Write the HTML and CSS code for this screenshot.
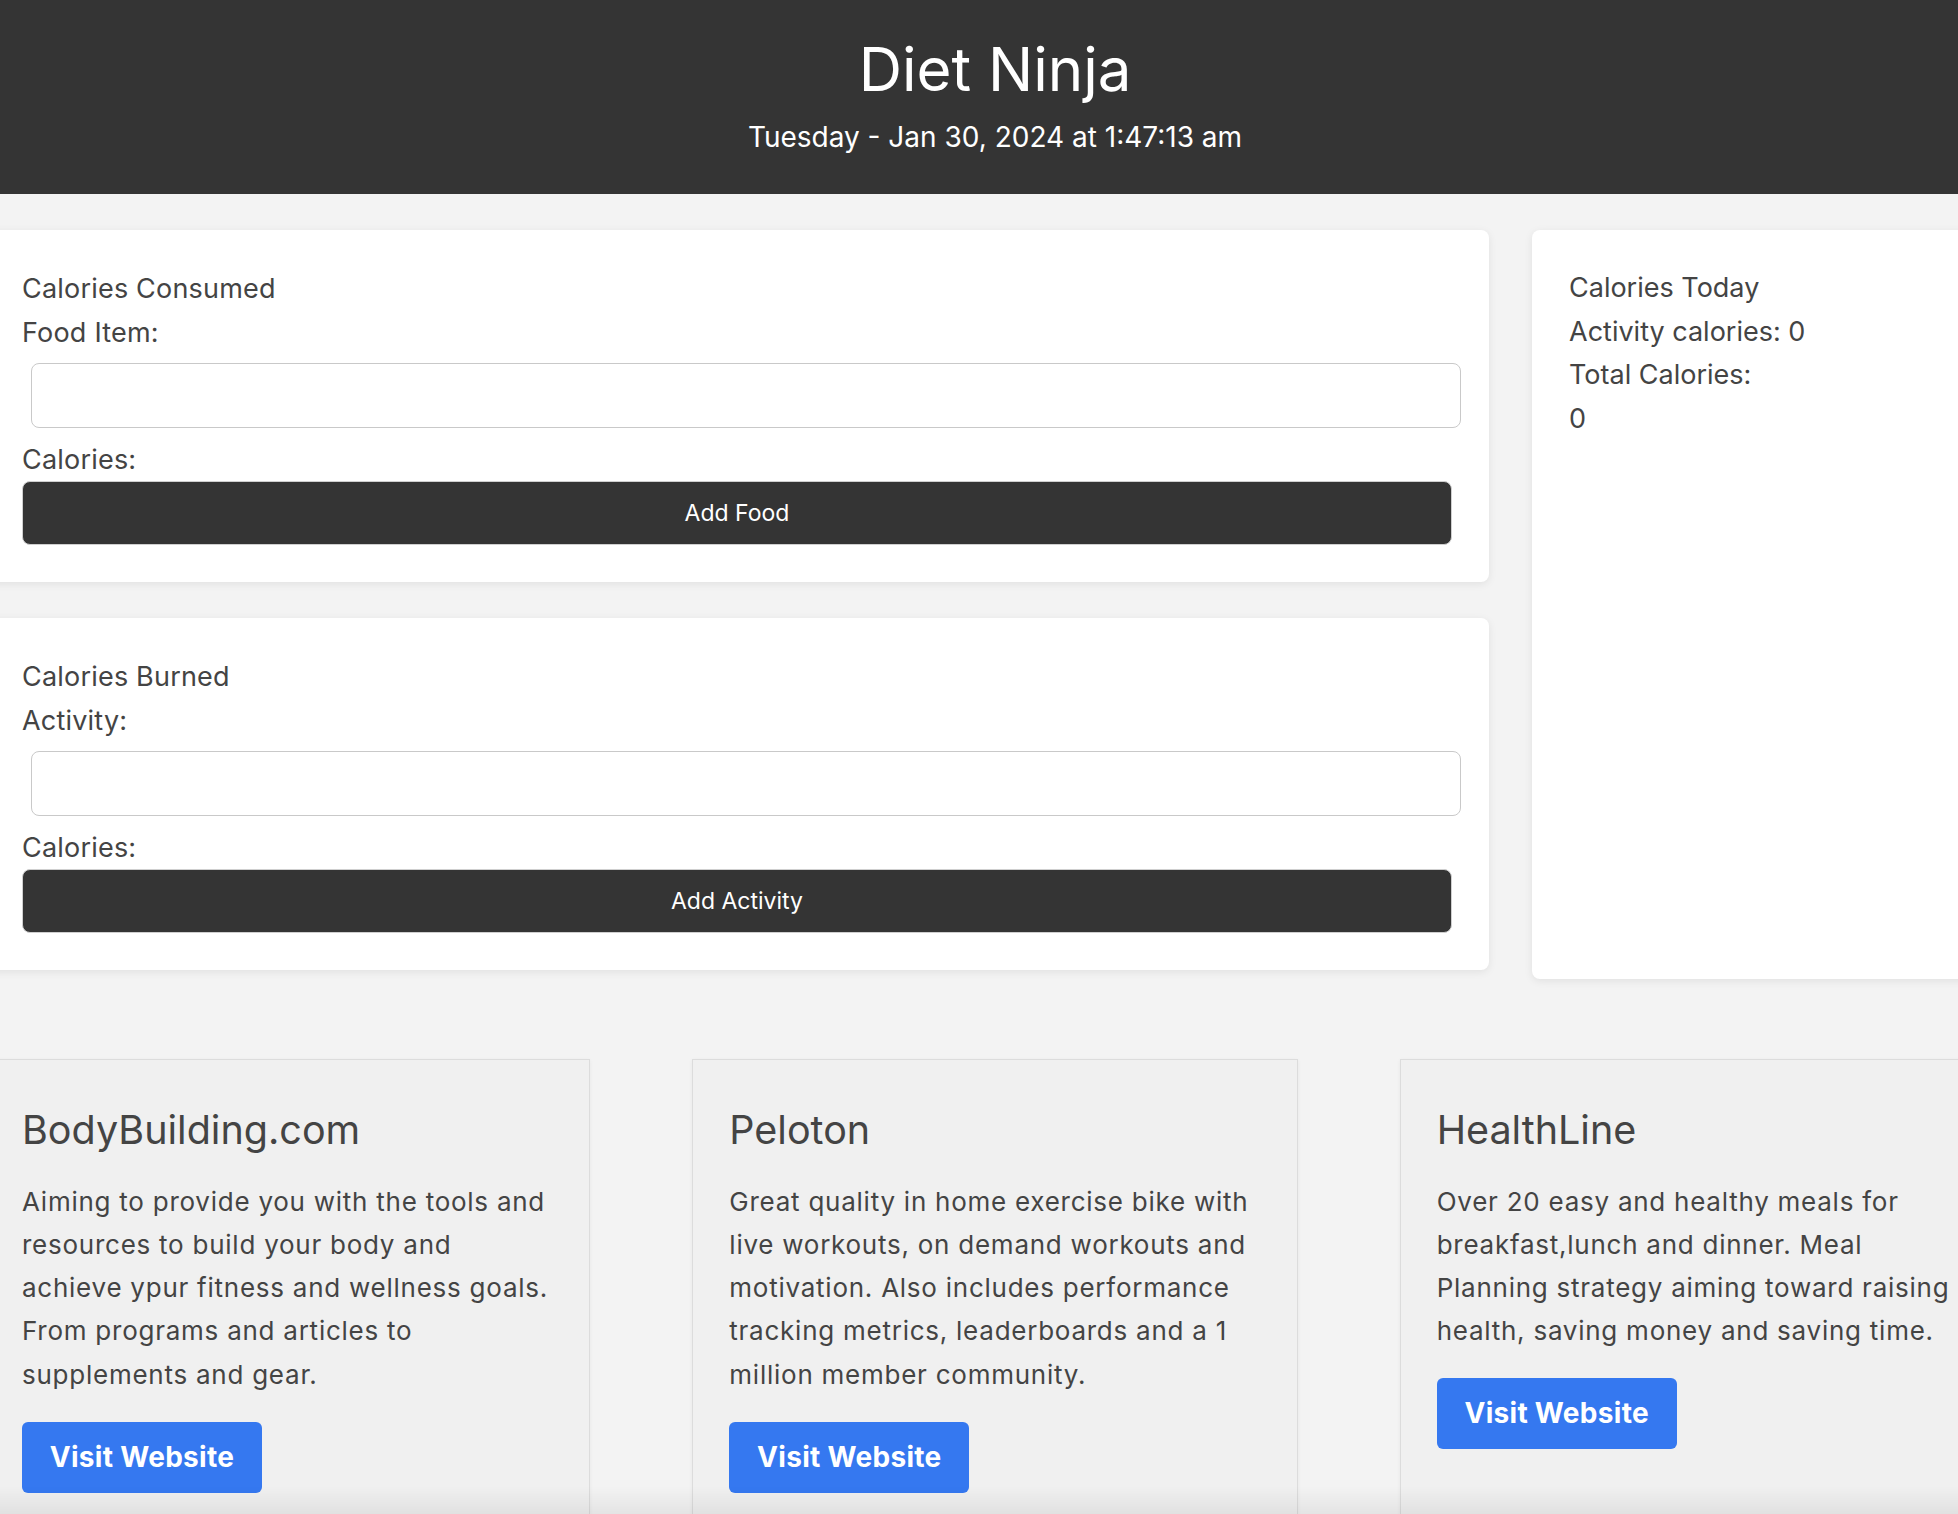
FILE: index.html
```html
<!DOCTYPE html>
<html lang="en">
<head>
<meta charset="utf-8">
<title>Diet Ninja</title>
<link rel="stylesheet" href="styles.css">
</head>
<body>
<div class="page">
  <header class="topbar">
    <h1 class="brand">Diet Ninja</h1>
    <p class="clock">Tuesday - Jan 30, 2024 at 1:47:13 am</p>
  </header>

  <main class="dash">
    <div class="forms">
      <section class="panel">
        <div class="line">Calories Consumed</div>
        <label class="line" for="food">Food Item:</label>
        <input class="field" id="food" type="text">
        <label class="line">Calories:</label>
        <button class="action" type="button">Add Food</button>
      </section>
      <section class="panel">
        <div class="line">Calories Burned</div>
        <label class="line" for="activity">Activity:</label>
        <input class="field" id="activity" type="text">
        <label class="line">Calories:</label>
        <button class="action" type="button">Add Activity</button>
      </section>
    </div>
    <aside class="summary">
      <div class="line">Calories Today</div>
      <div class="line">Activity calories: 0</div>
      <div class="line">Total Calories:</div>
      <div class="line">0</div>
    </aside>
  </main>

  <section class="links">
    <article class="site">
      <h2 class="site-name">BodyBuilding.com</h2>
      <p class="site-text">Aiming to provide you with the tools and resources to build your body and achieve ypur fitness and wellness goals. From programs and articles to supplements and gear.</p>
      <a class="visit" href="#">Visit Website</a>
    </article>
    <article class="site">
      <h2 class="site-name">Peloton</h2>
      <p class="site-text">Great quality in home exercise bike with live workouts, on demand workouts and motivation. Also includes performance tracking metrics, leaderboards and a 1 million member community.</p>
      <a class="visit" href="#">Visit Website</a>
    </article>
    <article class="site">
      <h2 class="site-name">HealthLine</h2>
      <p class="site-text">Over 20 easy and healthy meals for breakfast,lunch and dinner. Meal Planning strategy aiming toward raising health, saving money and saving time.</p>
      <a class="visit" href="#">Visit Website</a>
    </article>
  </section>
</div>
<div class="bottom-fade"></div>
</body>
</html>
```

FILE: styles.css
```css
html, body {
  margin: 0;
  padding: 0;
  overflow: hidden;
  background: #f3f3f3;
}

body {
  font-family: "Inter", "Liberation Sans", sans-serif;
  color: #444444;
}

.page {
  width: 1990px;
}

.topbar {
  background: #343434;
  color: #ffffff;
  text-align: center;
  padding: 32px 0 40px;
}

.brand {
  margin: 0 0 14px;
  font-size: 60px;
  line-height: 74px;
  font-weight: 400;
}

.clock {
  margin: 0;
  font-size: 28px;
  line-height: 34px;
}

.dash {
  display: flex;
  align-items: flex-start;
  gap: 43px;
  margin: 36px -15px 0;
}

.forms {
  width: 1504px;
  display: flex;
  flex-direction: column;
  gap: 36px;
}

.panel {
  background: #ffffff;
  border-radius: 0 8px 8px 0;
  box-shadow: 0 2px 8px rgba(0, 0, 0, 0.08);
  padding: 37px 37px 37px;
  display: flex;
  flex-direction: column;
}

.line {
  display: block;
  font-size: 27px;
  line-height: 43.5px;
  letter-spacing: 0.2px;
}

.field {
  box-sizing: border-box;
  width: 100%;
  height: 65px;
  margin: 9px 0 9.5px 9px;
  border: 1px solid #c9c9c9;
  border-radius: 8px;
  background: #ffffff;
  font: inherit;
}

.action {
  box-sizing: border-box;
  width: 100%;
  height: 64px;
  border: 1px solid #cfcfcf;
  border-radius: 8px;
  background: #343434;
  color: #ffffff;
  font-family: inherit;
  font-size: 23px;
}

.summary {
  flex: 1;
  min-height: 749px;
  box-sizing: border-box;
  background: #ffffff;
  border-radius: 8px 0 0 8px;
  box-shadow: 0 2px 8px rgba(0, 0, 0, 0.08);
  padding: 36px 37px;
}

.summary .line {
  letter-spacing: 0;
}

.links {
  display: flex;
  gap: 102px;
  margin: 80px -15px 0;
}

.site {
  flex: 1;
  background: #f0f0f0;
  border: 1px solid #dcdcdc;
  box-shadow: 0 1px 4px rgba(0, 0, 0, 0.05);
  padding: 37px 36px 37px;
}

.site-name {
  margin: 9px 0 0;
  font-size: 39.5px;
  line-height: 48px;
  font-weight: 400;
}

.site-text {
  margin: 25.6px 0;
  font-size: 26px;
  line-height: 43.3px;
  letter-spacing: 0.75px;
}

.visit {
  display: inline-block;
  box-sizing: border-box;
  width: 240px;
  height: 71px;
  line-height: 71px;
  text-align: center;
  background: #3578f0;
  color: #ffffff;
  border-radius: 6px;
  font-size: 28px;
  letter-spacing: 0.3px;
  font-weight: 700;
  text-decoration: none;
}

.bottom-fade {
  position: fixed;
  left: 0;
  right: 0;
  bottom: 0;
  height: 28px;
  background: linear-gradient(rgba(0, 0, 0, 0), rgba(0, 0, 0, 0.06));
  pointer-events: none;
}
```
